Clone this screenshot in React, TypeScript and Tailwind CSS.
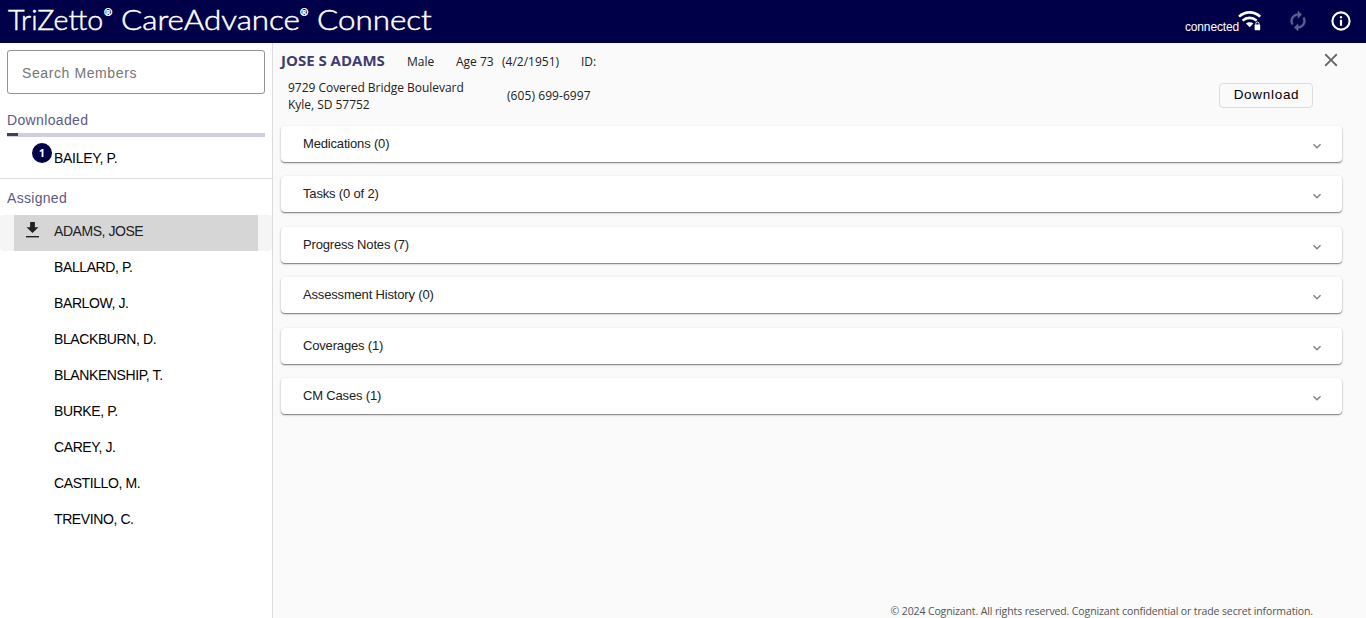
import React from "react";
import { MdClose, MdExpandMore } from "react-icons/md";

const assigned = ["BALLARD, P.", "BARLOW, J.", "BLACKBURN, D.", "BLANKENSHIP, T.", "BURKE, P.", "CAREY, J.", "CASTILLO, M.", "TREVINO, C."];

const sections = [
  { title: "Medications (0)", cls: "mt-0" },
  { title: "Tasks (0 of 2)", cls: "mt-[14px]" },
  { title: "Progress Notes (7)", cls: "mt-[15px]" },
  { title: "Assessment History (0)", cls: "mt-[14px]" },
  { title: "Coverages (1)", cls: "mt-[15px]" },
  { title: "CM Cases (1)", cls: "mt-[14px]" },
];

function WifiLock() {
  return (
    <svg width="24" height="20" viewBox="0 0 24 20" fill="none">
      <path d="M1 5.6C7.2 -0.1 16 -0.1 22.2 5.6" stroke="#fff" strokeWidth="2.6" />
      <path d="M4.6 9.6C8.6 5.9 14.6 5.9 18.6 9.6" stroke="#fff" strokeWidth="2.6" />
      <path d="M8 12.6C10 10.7 13.4 10.7 15.4 12.6L11.7 16.2Z" fill="#fff" />
      <rect x="16.6" y="13.6" width="5.6" height="5.6" rx="0.6" fill="#fff" />
      <path d="M17.8 13.8V12.6a1.6 1.6 0 0 1 3.2 0v1.2" stroke="#fff" strokeWidth="1" />
    </svg>
  );
}

function SyncIcon() {
  return (
    <svg width="22" height="22" viewBox="0 0 24 24" fill="#5f5f90" stroke="#5f5f90" strokeWidth="0.6" className="mt-[10px] ml-[25px] -scale-x-100">
      <path d="M12 4V1L8 5l4 4V6c3.31 0 6 2.69 6 6 0 1.01-.25 1.97-.7 2.8l1.46 1.46C19.54 15.03 20 13.57 20 12c0-4.42-3.58-8-8-8z" />
      <path d="M12 18c-3.31 0-6-2.69-6-6 0-1.01.25-1.97.7-2.8L5.24 7.74C4.46 8.97 4 10.43 4 12c0 4.42 3.58 8 8 8v3l4-4-4-4v3z" />
    </svg>
  );
}

function InfoIcon() {
  return (
    <svg width="24" height="24" viewBox="0 0 24 24" fill="none" className="mt-[9px] ml-[20px]">
      <circle cx="12" cy="12" r="8.6" stroke="#fff" strokeWidth="2.1" />
      <rect x="10.9" y="7.2" width="2.2" height="2.1" fill="#fff" />
      <rect x="10.9" y="10.8" width="2.2" height="6" fill="#fff" />
    </svg>
  );
}

function DownloadIcon() {
  return (
    <svg width="13" height="16" viewBox="0 0 13 16" fill="#212121">
      <path d="M4.1 0H8.9V5.2H12.5L6.5 11L0.5 5.2H4.1Z" />
      <rect x="0" y="14" width="13" height="1.4" />
    </svg>
  );
}

function Member({ name }: { name: string }) {
  return <li className="flex h-9 items-center pb-1 pl-[54px] text-[14px] leading-none tracking-[-0.4px]">{name}</li>;
}

export default function App() {
  return (
    <div className="flex h-[618px] w-[1366px] flex-col overflow-hidden bg-white font-['Liberation_Sans',Arial,sans-serif] text-black">
      <header className="flex h-[43px] shrink-0 items-start justify-between bg-[#000048] text-white">
        <h1 className="flex h-[38px] items-center whitespace-nowrap pl-2 font-[Lato,sans-serif] text-[28px] leading-none font-light [-webkit-text-stroke:0.5px_#fff]">
          <span className="w-[96px] origin-left scale-x-[1.02]">TriZetto</span>
          <sup className="top-[-7px] w-[17px] text-[10px] font-normal">®</sup>
          <span className="w-[179px] origin-left scale-x-[1.12]">CareAdvance</span>
          <sup className="top-[-7px] w-[17px] text-[10px] font-normal">®</sup>
          <span className="origin-left scale-x-[1.12]">Connect</span>
        </h1>
        <div className="flex pr-[13px]">
          <span className="pt-[20px] text-[12px] leading-[14px] tracking-[-0.15px]">connected</span>
          <span className="-ml-px pt-[11px]"><WifiLock /></span>
          <SyncIcon />
          <InfoIcon />
        </div>
      </header>
      <div className="flex min-h-0 flex-1">
        <aside className="w-[273px] shrink-0 border-r border-[#dcdcdc] bg-white">
          <div className="mt-[7px] ml-[7px] flex h-[44px] w-[258px] items-center rounded-[3px] border border-[#949494] pt-[2px] pl-[14px] text-[14px] tracking-[0.6px] text-[#757575]">Search Members</div>
          <h2 className="mt-[18px] pl-[7px] text-[14px] leading-[16px] tracking-[0.35px] text-[#5c5985]">Downloaded</h2>
          <div className="mt-[5px] ml-[7px] h-1 w-[258px] bg-[#cfcedc]"><div className="h-[3px] w-[11px] bg-[#3f3c72]" /></div>
          <div className="flex h-[42px] items-start border-b border-[#dcdcdc] pl-8">
            <span className="mt-[6px] flex size-5 items-center justify-center rounded-full bg-[#000048] font-['Open_Sans',sans-serif] text-[11px] font-bold text-white">1</span>
            <span className="mt-[13px] ml-[2px] text-[14px] leading-[16px] tracking-[-0.3px]">BAILEY, P.</span>
          </div>
          <h2 className="mt-[11px] pl-[7px] text-[14px] leading-[16px] tracking-[0.3px] text-[#5c5985]">Assigned</h2>
          <div className="mt-[9px] h-9 rounded bg-[#f5f5f5] px-[14px]">
            <div className="flex h-9 items-center bg-[#d6d6d6] pb-1 pl-[12px] text-[14px] tracking-[-0.45px] text-[#212121]">
              <span className="pb-[2px]"><DownloadIcon /></span>
              <span className="ml-[15px]">ADAMS, JOSE</span>
            </div>
          </div>
          <ul>{assigned.map((m) => <Member key={m} name={m} />)}</ul>
        </aside>
        <main className="flex min-w-0 flex-1 flex-col bg-[#fafafa] pl-[8px] font-['Open_Sans',sans-serif] text-[12px] text-[#212121]">
          <div className="flex h-[36px] items-center whitespace-nowrap">
            <strong className="w-[126px] pb-[2px] text-[15px] leading-[20px] text-[#3f3c72]">JOSE S ADAMS</strong>
            <span className="w-[49px] pt-px">Male</span>
            <span className="w-[46px] pt-px">Age 73</span>
            <span className="w-[79px] pt-px">(4/2/1951)</span>
            <span className="pt-px">ID:</span>
            <MdClose className="mr-[24px] mb-[2px] ml-auto size-[22px] text-[#666]" />
          </div>
          <div className="flex h-[47px] items-start pl-[7px]">
            <address className="w-[219px] leading-[17px] tracking-[-0.03px] not-italic">9729 Covered Bridge Boulevard<br />Kyle, SD 57752</address>
            <span className="mt-[8px] leading-[17px] tracking-[0.07px]">(605) 699-6997</span>
            <button className="mt-[4px] mr-[53px] ml-auto h-[25px] w-[94px] rounded border border-[#dcdcdc] bg-[#fafafa] pb-px pl-px font-['Liberation_Sans',sans-serif] text-[13.5px] leading-none tracking-[0.7px] text-black">Download</button>
          </div>
          {sections.map((s) => (
            <section key={s.title} className={`${s.cls} flex h-[36px] w-[1061px] shrink-0 items-center justify-between rounded bg-white pr-[17px] pl-[22px] font-['Liberation_Sans',sans-serif] text-[13px] tracking-[-0.17px] shadow-[0_1px_1px_rgba(0,0,0,0.4),0_1px_3px_rgba(0,0,0,0.18)]`}>
              <span>{s.title}</span>
              <MdExpandMore className="mt-[4px] size-4 text-[#808080]" />
            </section>
          ))}
          <footer className="-mb-px mt-auto pr-[53px] text-right text-[10.5px] leading-[15px] tracking-[-0.12px] text-[#555]">© 2024 Cognizant. All rights reserved. Cognizant confidential or trade secret information.</footer>
        </main>
      </div>
    </div>
  );
}
